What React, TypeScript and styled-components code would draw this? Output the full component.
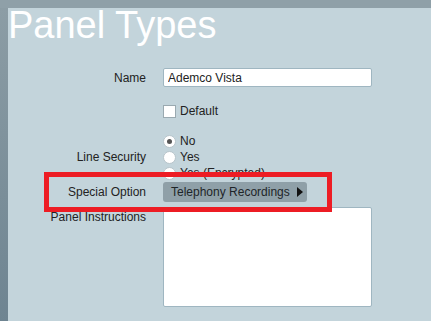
import React from 'react';
import styled, {createGlobalStyle} from 'styled-components';

const GlobalStyle = createGlobalStyle`
  html, body {
    margin: 0;
    padding: 0;
  }
  body {
    font-family: 'Liberation Sans', Arial, sans-serif;
    background: #c3d4db;
  }
`;

const Frame = styled.div`
  display: flex;
  flex-direction: column;
  height: 100vh;
  overflow: hidden;
`;

const TopBar = styled.div`
  height: 8px;
  flex: none;
  background: #8fa0a8;
`;

const Body = styled.div`
  display: flex;
  flex: 1;
`;

const SideStrip = styled.div`
  width: 8px;
  flex: none;
  background: linear-gradient(to bottom, #8c9da5, #6e8491);
`;

const Panel = styled.main`
  flex: 1;
  position: relative;
  background: #c3d4db;
  color: #222;
  font-size: 12px;
`;

const Title = styled.h1`
  margin: 0;
  font-size: 38px;
  line-height: 34px;
  font-weight: normal;
  color: #fff;
  white-space: nowrap;
`;

const Row = styled.div<{$top: number; $align?: string}>`
  display: grid;
  grid-template-columns: 138px 209px;
  column-gap: 17px;
  align-items: ${p => p.$align || 'center'};
  margin-top: ${p => p.$top}px;
`;

const Label = styled.label<{$pad?: number}>`
  text-align: right;
  line-height: 16px;
  padding-top: ${p => p.$pad || 0}px;
  white-space: nowrap;
`;

const TextInput = styled.input`
  box-sizing: border-box;
  width: 209px;
  height: 19px;
  margin: 0;
  padding: 0 4px;
  border: 1px solid #9fb6c1;
  border-radius: 2px;
  background: #fff;
  font: 12px 'Liberation Sans', Arial, sans-serif;
  color: #222;
  outline: none;
`;

const TextArea = styled.textarea`
  box-sizing: border-box;
  width: 209px;
  height: 100px;
  margin: 0;
  border: 1px solid #9fb6c1;
  border-radius: 2px;
  background: #fff;
  resize: none;
  display: block;
`;

const Choice = styled.label`
  display: flex;
  align-items: center;
  gap: 4px;
  height: 16px;
  line-height: 16px;
  white-space: nowrap;
`;

const Box = styled.span`
  box-sizing: border-box;
  width: 13px;
  height: 13px;
  border: 1px solid #9aa9b0;
  background: #fff;
`;

const Dot = styled.span<{$on?: boolean}>`
  box-sizing: border-box;
  width: 13px;
  height: 13px;
  border-radius: 50%;
  border: 1px solid #b7c4ca;
  background: #fff;
  display: flex;
  align-items: center;
  justify-content: center;
  &::after {
    content: '';
    width: 5px;
    height: 5px;
    border-radius: 50%;
    background: ${p => (p.$on ? '#555' : 'transparent')};
  }
`;

const RadioGroup = styled.div`
  display: flex;
  flex-direction: column;
`;

const OptionButton = styled.button`
  box-sizing: border-box;
  width: 144px;
  height: 20px;
  margin: 0;
  padding: 0 4px 0 8px;
  border: none;
  border-radius: 3px;
  background: #8fa0a8;
  color: #1e2528;
  font: 12px 'Liberation Sans', Arial, sans-serif;
  display: flex;
  align-items: center;
  justify-content: space-between;
  white-space: nowrap;
`;

const Arrow = styled.span`
  width: 0;
  height: 0;
  border-top: 5px solid transparent;
  border-bottom: 5px solid transparent;
  border-left: 6px solid #111;
`;

const Highlight = styled.div`
  position: absolute;
  left: 36px;
  top: 164px;
  width: 288px;
  height: 40px;
  box-sizing: border-box;
  border: 5px solid #ed1c24;
  pointer-events: none;
`;

const SECURITY = ['No', 'Yes', 'Yes (Encrypted)'];

export default function App() {
  return (
    <>
      <GlobalStyle />
      <Frame>
        <TopBar />
        <Body>
          <SideStrip />
          <Panel>
            <Title>Panel Types</Title>

            <Row $top={26}>
              <Label>Name</Label>
              <TextInput defaultValue="Ademco Vista" />
            </Row>

            <Row $top={16}>
              <span />
              <Choice>
                <Box />
                Default
              </Choice>
            </Row>

            <Row $top={14}>
              <Label>Line Security</Label>
              <RadioGroup>
                {SECURITY.map((s, i) => (
                  <Choice key={s}>
                    <Dot $on={i === 0} />
                    {s}
                  </Choice>
                ))}
              </RadioGroup>
            </Row>

            <Row $top={1}>
              <Label>Special Option</Label>
              <OptionButton>
                Telephony Recordings
                <Arrow />
              </OptionButton>
            </Row>

            <Row $top={5} $align="start">
              <Label $pad={2}>Panel Instructions</Label>
              <TextArea />
            </Row>

            <Highlight />
          </Panel>
        </Body>
      </Frame>
    </>
  );
}
